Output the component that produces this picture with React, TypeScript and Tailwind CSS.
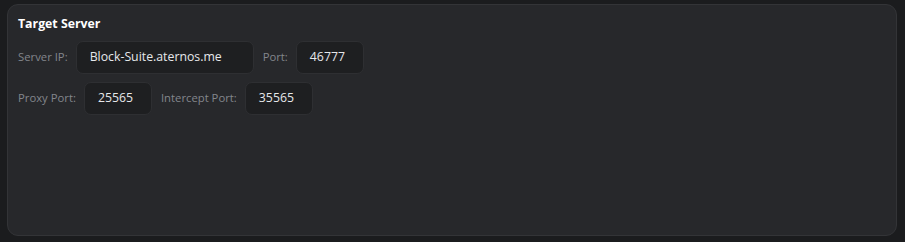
import React from "react";

const Field = ({ label, value, width }: { label: string; value: string; width: string }) => (
  <div className="flex items-center gap-2">
    <span className="text-[11.3px] text-[#83868b]">{label}</span>
    <div
      className={`${width} h-[33px] flex items-center px-[13px] rounded-[7px] bg-[#1e1f21] border border-[#2e2f32] text-[12.3px] text-[#e6e8eb]`}
    >
      {value}
    </div>
  </div>
);

export default function App() {
  return (
    <div
      className="w-[905px] h-[242px] bg-[#1b1c1e] pt-[4px] pl-[7px] pr-[8px] pb-[6px]"
      style={{ fontFamily: '"Open Sans", "Noto Sans", sans-serif' }}
    >
      <div className="h-full rounded-[11px] bg-[#27282b] border border-[#333437] px-[10px] pt-[10px]">
        <div className="text-[12.3px] font-bold text-white leading-[18px]">Target Server</div>
        <div className="mt-[8px] flex flex-col gap-[8px]">
          <div className="flex items-center gap-[9px]">
            <Field label="Server IP:" value="Block-Suite.aternos.me" width="w-[178px]" />
            <Field label="Port:" value="46777" width="w-[68px]" />
          </div>
          <div className="flex items-center gap-[9px]">
            <Field label="Proxy Port:" value="25565" width="w-[68px]" />
            <Field label="Intercept Port:" value="35565" width="w-[68px]" />
          </div>
        </div>
      </div>
    </div>
  );
}
